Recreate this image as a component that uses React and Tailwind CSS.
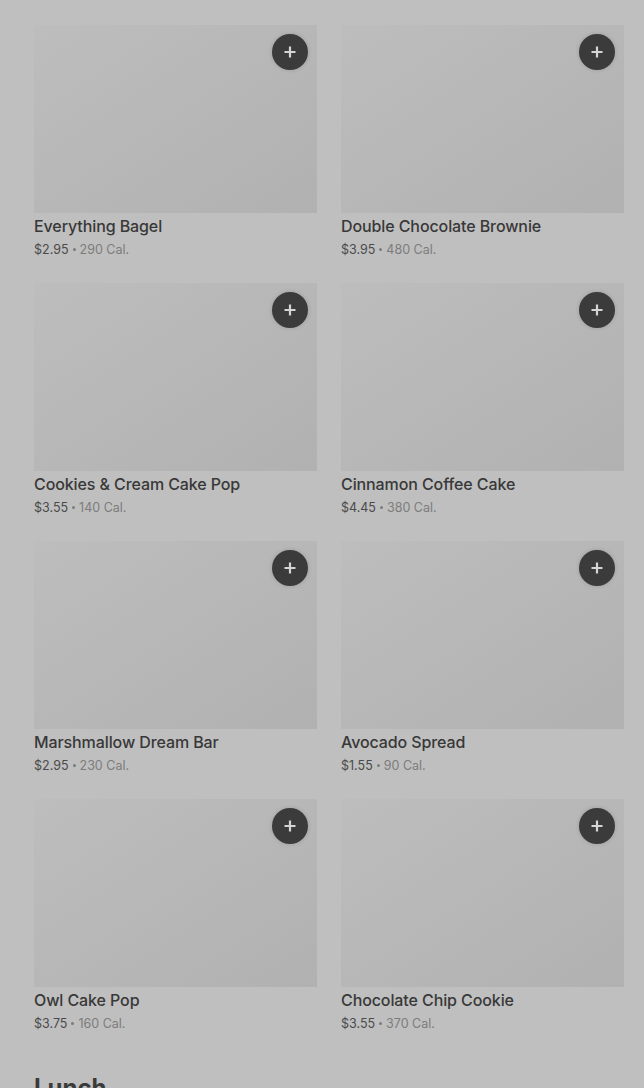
const items = [
  { name: "Everything Bagel", price: "$2.95", cal: "290 Cal." },
  { name: "Double Chocolate Brownie", price: "$3.95", cal: "480 Cal." },
  { name: "Cookies & Cream Cake Pop", price: "$3.55", cal: "140 Cal." },
  { name: "Cinnamon Coffee Cake", price: "$4.45", cal: "380 Cal." },
  { name: "Marshmallow Dream Bar", price: "$2.95", cal: "230 Cal." },
  { name: "Avocado Spread", price: "$1.55", cal: "90 Cal." },
  { name: "Owl Cake Pop", price: "$3.75", cal: "160 Cal." },
  { name: "Chocolate Chip Cookie", price: "$3.55", cal: "370 Cal." },
];

function ItemCard({ item }) {
  return (
    <div className="flex flex-col">
      <div className="relative h-[188px] w-full bg-gradient-to-br from-[#bdbdbd] to-[#b1b1b1]">
        <button className="absolute right-[9px] top-[9px] flex h-[36px] w-[36px] items-center justify-center rounded-full bg-[#3b3b3b] shadow-[0_0_4px_rgba(0,0,0,0.15)]">
          <svg width="14" height="14" viewBox="0 0 14 14">
            <path d="M7 1.5v11M1.5 7h11" stroke="#d4d4d4" strokeWidth="2.2" />
          </svg>
        </button>
      </div>
      <div className="mt-[2px] text-[16px] font-medium leading-[22px] tracking-[-0.1px] text-[#383838]">
        {item.name}
      </div>
      <div className="flex h-[24px] items-center gap-[4px] pt-[1px] text-[12.5px] leading-[23px] text-[#4a4a4a]">
        <span>{item.price}</span>
        <span className="h-[3px] w-[3px] rounded-full bg-[#7c7c7c]" />
        <span className="text-[#7c7c7c]">{item.cal}</span>
      </div>
    </div>
  );
}

export default function App() {
  return (
    <div
      className="h-[1088px] overflow-hidden bg-[#bfbfbf] pl-[34px] pr-[20px] pt-[25px]"
      style={{ fontFamily: "Inter, Roboto, sans-serif" }}
    >
      <div className="grid grid-cols-2 gap-x-[24px] gap-y-[22px]">
        {items.map((item) => (
          <ItemCard key={item.name} item={item} />
        ))}
      </div>
      <h2 className="mt-[38px] text-[24px] font-bold leading-[30px] text-[#3a3a3a]">
        Lunch
      </h2>
    </div>
  );
}
